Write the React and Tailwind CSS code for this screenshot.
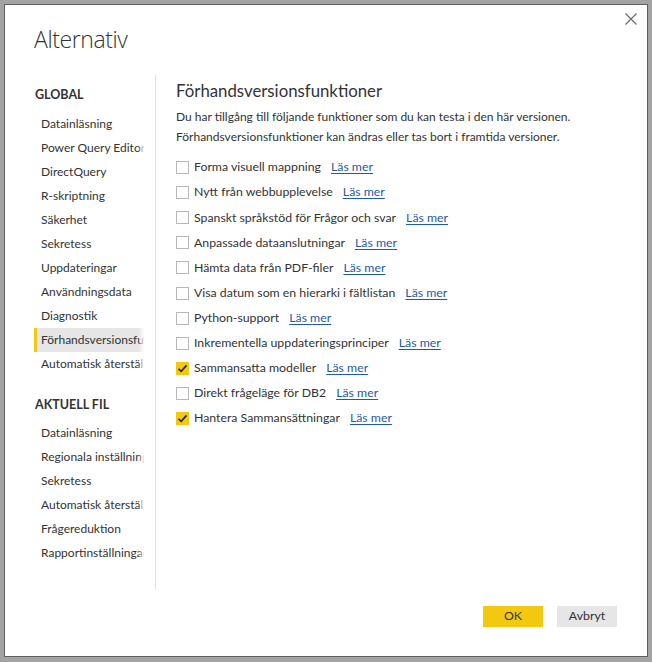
import React from "react";

const globalItems = [
  "Datainläsning",
  "Power Query Editor",
  "DirectQuery",
  "R-skriptning",
  "Säkerhet",
  "Sekretess",
  "Uppdateringar",
  "Användningsdata",
  "Diagnostik",
  "Förhandsversionsfunktioner",
  "Automatisk återställning",
];
const fileItems = [
  "Datainläsning",
  "Regionala inställningar",
  "Sekretess",
  "Automatisk återställning",
  "Frågereduktion",
  "Rapportinställningar",
];
const features = [
  ["Forma visuell mappning", false],
  ["Nytt från webbupplevelse", false],
  ["Spanskt språkstöd för Frågor och svar", false],
  ["Anpassade dataanslutningar", false],
  ["Hämta data från PDF-filer", false],
  ["Visa datum som en hierarki i fältlistan", false],
  ["Python-support", false],
  ["Inkrementella uppdateringsprinciper", false],
  ["Sammansatta modeller", true],
  ["Direkt frågeläge för DB2", false],
  ["Hantera Sammansättningar", true],
];

function NavItem({ label, selected }) {
  return (
    <div
      className={
        "relative h-6 flex items-center pl-[7px] overflow-hidden whitespace-nowrap " +
        (selected ? "bg-[#e6e6e6]" : "")
      }
    >
      {selected && <div className="absolute left-0 top-0 bottom-0 w-[3px] bg-[#f2c811]" />}
      <span>{label}</span>
      <div className="absolute right-0 top-0 bottom-0 w-[6px] bg-gradient-to-r from-transparent to-white/90" />
    </div>
  );
}

function Checkbox({ checked }) {
  if (checked) {
    return (
      <div className="w-[13px] h-[13px] bg-[#f2c811] flex items-center justify-center shrink-0">
        <svg width="11" height="11" viewBox="0 0 11 11">
          <path d="M1.5 5.8 L4.2 8.4 L9.5 2.4" fill="none" stroke="#252423" strokeWidth="1.6" />
        </svg>
      </div>
    );
  }
  return <div className="w-[13px] h-[13px] border border-[#b8b8b8] bg-white shrink-0" />;
}

export default function App() {
  return (
    <div
      className="w-[652px] h-[662px] bg-[#a3a3a3] pt-[4px] pl-[4px]"
      style={{ fontFamily: 'Lato, "Open Sans", sans-serif' }}
    >
      <div className="relative w-[644px] h-[653px] bg-white border border-[#5f5f5f] text-[#333333]">
        <svg className="absolute left-[620px] top-[8px]" width="12" height="12" viewBox="0 0 12 12">
          <path d="M0.5 0.5 L11.5 11.5 M11.5 0.5 L0.5 11.5" stroke="#6b6b6b" strokeWidth="1.2" />
        </svg>
        <div
          className="pl-[29px] pt-[17px] text-[23px] font-light text-[#333] leading-[35px] tracking-[-0.4px]"
          style={{ fontFamily: '"Open Sans", sans-serif' }}
        >
          Alternativ
        </div>
        <div className="flex mt-[18px] h-[515px]">
          <div className="w-[150px] shrink-0 pl-[29px] pt-[10px] text-[12px]">
            <div className="font-bold text-[12.5px] h-[20px] leading-[20px] mb-[7px] pl-[1px]">GLOBAL</div>
            <div className="w-[110px]">
              {globalItems.map((it, i) => (
                <NavItem key={i} label={it} selected={i === 9} />
              ))}
            </div>
            <div className="font-bold text-[12.5px] h-[20px] leading-[20px] mt-[19px] mb-[6px] pl-[1px]">
              AKTUELL FIL
            </div>
            <div className="w-[110px]">
              {fileItems.map((it, i) => (
                <NavItem key={i} label={it} />
              ))}
            </div>
          </div>
          <div className="w-px bg-[#e1e1e1] shrink-0" />
          <div className="pl-[20px] pt-[4px]">
            <div className="text-[16.8px] leading-[24px] text-[#333]">Förhandsversionsfunktioner</div>
            <div className="text-[12px] leading-[19.5px] mt-[4px]">
              <div>Du har tillgång till följande funktioner som du kan testa i den här versionen.</div>
              <div>Förhandsversionsfunktioner kan ändras eller tas bort i framtida versioner.</div>
            </div>
            <div className="mt-[9px] text-[12.3px]">
              {features.map(([label, checked], i) => (
                <div key={i} className="h-[25.1px] flex items-center">
                  <Checkbox checked={checked} />
                  <span className="ml-[5px]">{label}</span>
                  <a className="ml-[10px] text-[#1e5aa8] underline underline-offset-2">Läs mer</a>
                </div>
              ))}
            </div>
          </div>
        </div>
        <div className="absolute left-[478px] top-[601px] flex gap-[14px] text-[12.3px]">
          <button className="w-[60px] h-[21px] bg-[#f2c811] text-[#333] flex items-center justify-center">OK</button>
          <button className="w-[60px] h-[21px] bg-[#e6e6e6] text-[#333] flex items-center justify-center">Avbryt</button>
        </div>
      </div>
    </div>
  );
}
